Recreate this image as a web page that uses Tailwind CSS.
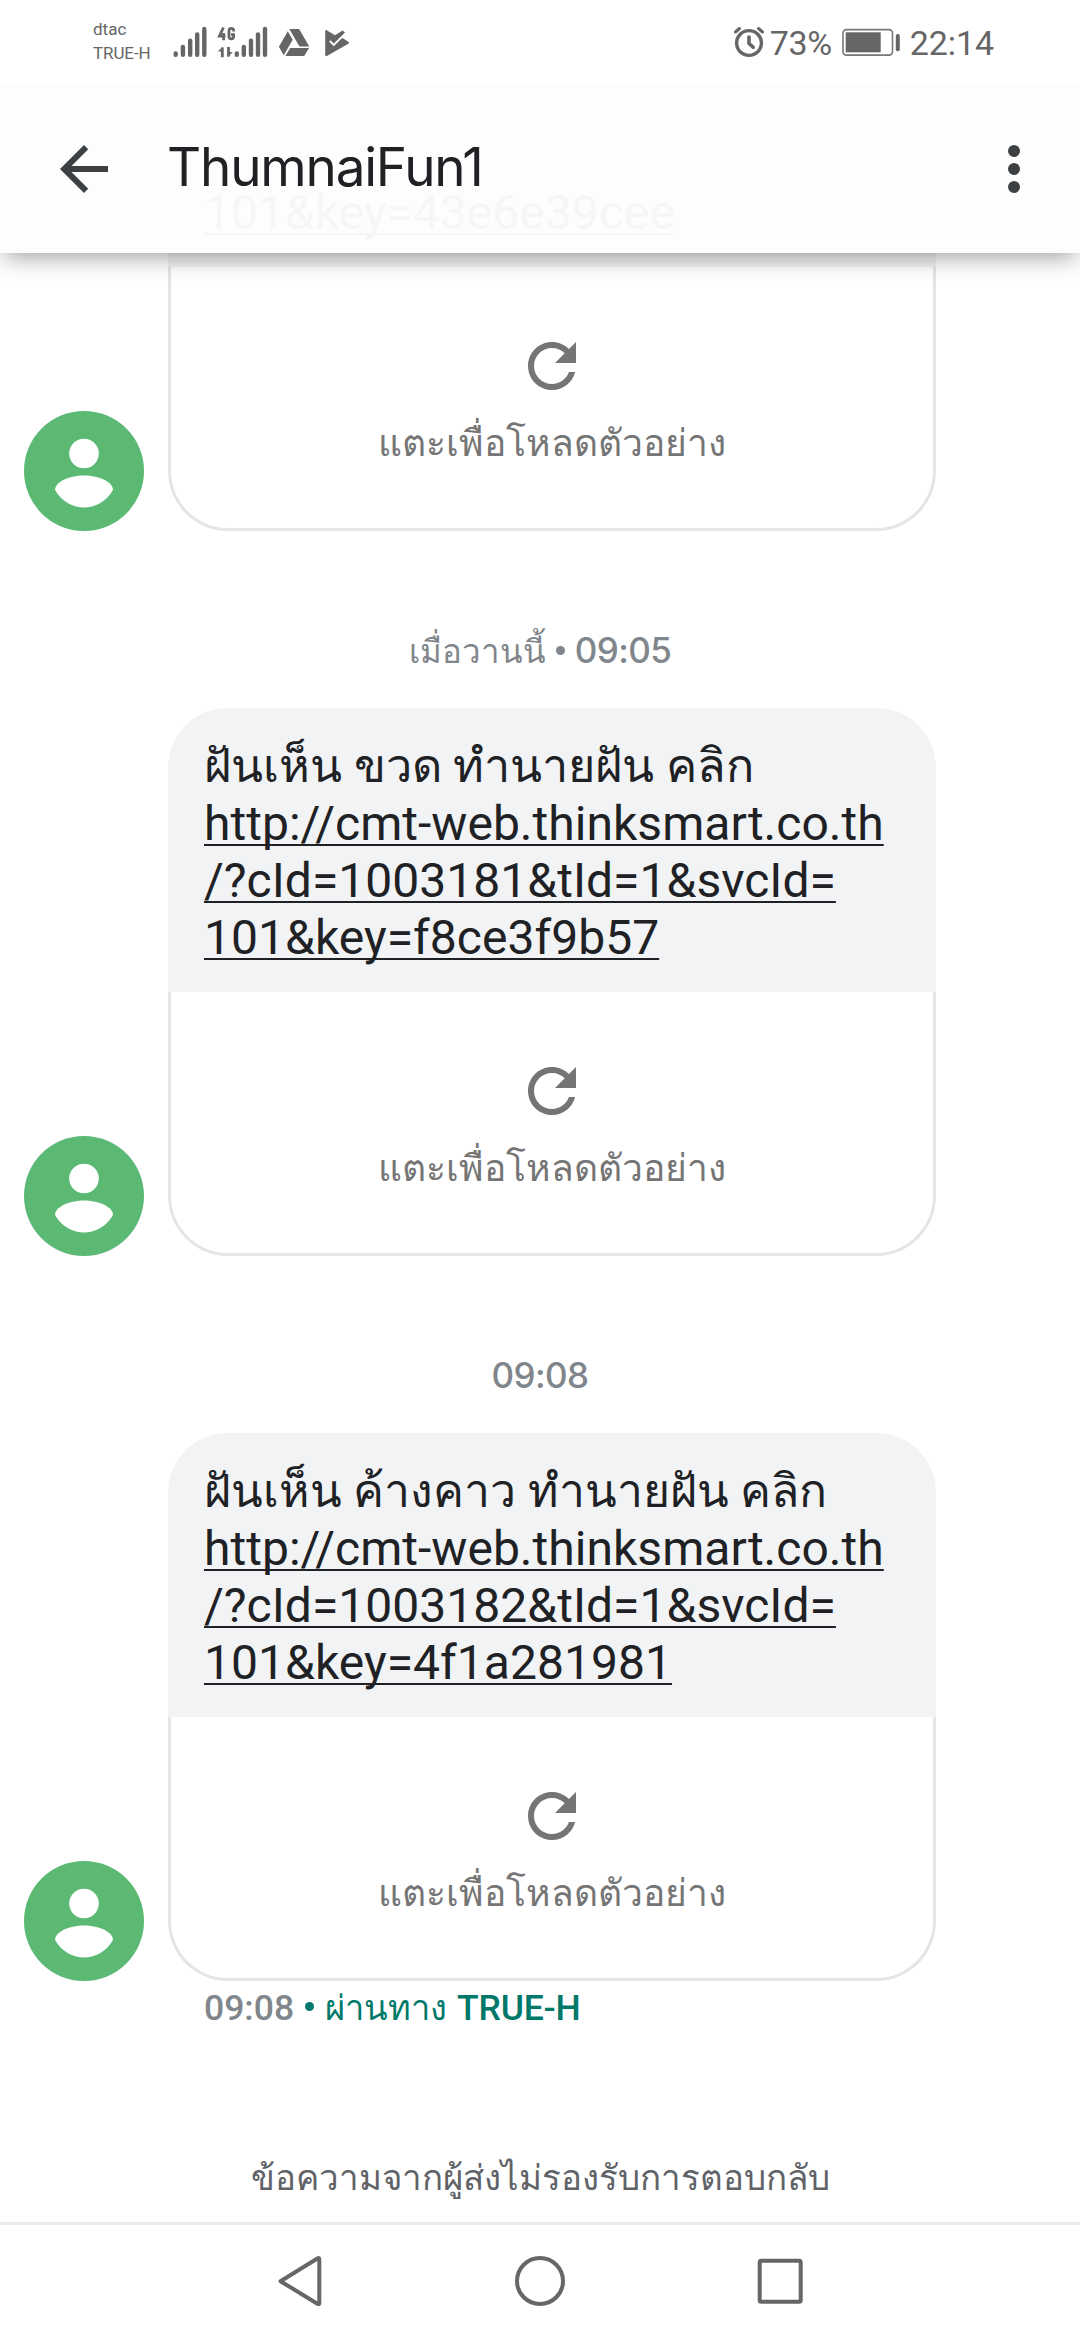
<!DOCTYPE html>
<html lang="th">
<head>
<meta charset="utf-8">
<title>ThumnaiFun1</title>
<script src="https://cdn.jsdelivr.net/npm/@tailwindcss/browser@4"></script>
</head>
<body class="bg-white">
<svg class="hidden">
  <symbol id="refresh" viewBox="0 0 24 24"><path d="M17.65 6.35C16.2 4.9 14.21 4 12 4c-4.42 0-7.99 3.58-7.99 8s3.57 8 7.99 8c3.73 0 6.84-2.55 7.73-6h-2.08c-.82 2.33-3.04 4-5.65 4-3.31 0-6-2.69-6-6s2.69-6 6-6c1.66 0 3.14.69 4.22 1.78L13 11h7V4l-2.35 2.35z"/></symbol>
  <symbol id="avatar" viewBox="0 0 120 120"><circle cx="60" cy="60" r="60" fill="#5bb974"/><circle cx="60" cy="42.500" r="14.800" fill="#fff"/><path d="M31 79c0-8 14-14.500 29-14.500S89 71 89 79c-6 10.500-17 17.500-29 17.500S37 89.500 31 79z" fill="#fff"/></symbol>
</svg>
<div class="flex h-[2340px] w-[1080px] flex-col overflow-hidden bg-white font-[Roboto,serif] text-[#202124]">

  <!-- status bar -->
  <div class="relative z-20 flex h-[85px] shrink-0 items-start bg-white pr-[86px] pl-[93px] text-[#666]">
    <div class="w-[78px] pt-[18px] text-[17px] leading-[23.5px]">
      <div>dtac</div><div class="tracking-[-0.1px]">TRUE-H</div>
    </div>
    <svg class="mt-[20px] h-[44px] w-[184px]" viewBox="171 20 184 44" fill="#666">
      <g stroke="#666" stroke-width="4.400" stroke-linecap="round">
        <path d="M175.700 53.500v1.300M182.900 47v7.800M190.200 40.700v14.100M197.200 34.500v20.300M204.300 29v25.800"/>
        <path d="M236.800 53.500v1.300M243.800 47v7.800M251 40.700v14.100M258 34.500v20.300M265 29v25.800"/>
      </g>
      <g fill="none" stroke="#666" stroke-width="2.800">
        <path d="M223.500 27.500l-4.200 8.700h6.200M223.600 33v7.200"/>
        <path d="M233.600 31.500v-1c0-1.300-.9-2.200-2.300-2.200s-2.300.9-2.300 2.200v6c0 1.400.9 2.300 2.300 2.300s2.300-.9 2.300-2.300v-1.900h-2.500"/>
        <path d="M222.300 47.500v9.800M228.500 47v9.500"/>
      </g>
      <path d="M217.800 51.500l5-4.800v4.800zM227.800 57.300v-5.300h5z"/>
      <path d="M289.300 29h9.800l10.200 17.500h-9.800zM287.800 31.300l4.900 8.500-9 15.500-4.800-8.600zM290.200 47.900h18.900l-4.900 8.200h-18.800z"/>
      <path d="M325.200 31c0-.8.700-1.200 1.500-.8l8.300 5 7.600-4.700 2.400 2.300-11 11.500 7-5.800 1.500-.6 5.800 3.800c.9.700.9 1.500 0 2.100l-21 12c-1.200.6-2.100.3-2.100-.8z"/>
      <path d="M329.800 41l4 3.900 11.500-11.300" fill="none" stroke="#fff" stroke-width="2"/>
    </svg>
    <div class="ml-auto flex items-start">
      <svg class="mt-[26px] h-[32px] w-[32px]" viewBox="732 26 32 32" fill="none" stroke="#666" stroke-linecap="round">
        <circle cx="748" cy="43" r="12.400" stroke-width="3.400"/><path d="M748 37v6.500l4.200 3.700" stroke-width="3.600"/><path d="M734.500 32l4-3.500M761.500 32l-4-3.500" stroke-width="3"/>
      </svg>
      <span class="mt-[23px] ml-[5px] w-[72px] text-[34px] leading-[40px] tracking-[-0.4px]">73%</span>
      <svg class="mt-[28px] h-[30px] w-[60px]" viewBox="841 28 60 30">
        <rect x="842" y="29.600" width="49.500" height="25.500" rx="3.500" fill="#fff" stroke="#777" stroke-width="1.600"/><rect x="844.700" y="32.300" width="35" height="20" fill="#666"/><rect x="894.800" y="34" width="4" height="17.300" rx="1.800" fill="#666"/>
      </svg>
      <span class="mt-[23px] ml-[8px] text-[34px] leading-[40px] tracking-[-0.1px]">22:14</span>
    </div>
  </div>

  <!-- app bar, slightly translucent over the scrolled conversation -->
  <header class="relative z-10 flex h-[168px] shrink-0 items-center bg-[#fdfdfd]/97 pr-[30px] pl-[48px] shadow-[0_8px_22px_-4px_rgba(0,0,0,0.38)]">
    <svg class="h-[72px] w-[72px]" viewBox="0 0 24 24" fill="#3c4043"><path d="M20 11H7.830l5.590-5.590L12 4l-8 8 8 8 1.410-1.410L7.830 13H20v-2z"/></svg>
    <h1 class="mb-[5px] ml-[47px] font-[Inter,sans-serif] text-[53px] leading-[64px] tracking-[-1.2px] whitespace-nowrap">ThumnaiFun1</h1>
    <svg class="ml-auto h-[72px] w-[72px]" viewBox="0 0 24 24" fill="#3c4043"><circle cx="12" cy="6" r="2"/><circle cx="12" cy="12" r="2"/><circle cx="12" cy="18" r="2"/></svg>
  </header>

  <main class="-mt-[168px] flex flex-col">
    <!-- first message, mostly scrolled away -->
    <div class="flex items-end gap-[24px] pl-[24px]">
      <svg class="h-[120px] w-[120px]"><use href="#avatar"/></svg>
      <div class="w-[768px]">
        <div class="flex h-[182px] items-end bg-[#f1f3f4] px-[36px] pb-[26px] text-[48px] leading-[57px]">
          <a class="underline decoration-2 underline-offset-[4px] [text-decoration-skip-ink:none]">101&amp;key=43e6e39cee</a>
        </div>
        <div class="flex h-[264px] flex-col items-center rounded-b-[60px] border-x-[3px] border-b-[3px] border-[#e5e5e5] pt-[63px]">
          <svg class="h-[72px] w-[72px]" fill="#757575"><use href="#refresh"/></svg>
          <p class="mt-[16px] text-[37.2px] leading-[50px] whitespace-nowrap text-[#757575]">แตะเพื่อโหลดตัวอย่าง</p>
        </div>
      </div>
    </div>

    <p class="flex h-[177px] items-baseline justify-center gap-[10px] pt-[94px] leading-[50px] whitespace-nowrap text-[#80868b]">
      <span class="text-[33px]">เมื่อวานนี้</span><span class="font-[Inter,sans-serif] text-[35px] font-medium tracking-[-0.6px]"><span class="mr-[10px] inline-block h-[9px] w-[9px] rounded-full bg-[#80868b] align-[8px]"></span>09:05</span>
    </p>

    <div class="flex items-end gap-[24px] pl-[24px]">
      <svg class="h-[120px] w-[120px]"><use href="#avatar"/></svg>
      <div class="w-[768px]">
        <div class="h-[284px] rounded-t-[60px] bg-[#f1f3f4] px-[36px] pt-[30px] text-[48px] leading-[57px] whitespace-nowrap">
          <p class="h-[57px] text-[46.8px]">ฝันเห็น ขวด ทำนายฝัน คลิก</p>
          <a class="tracking-[0.03px] underline decoration-2 underline-offset-[4px] [text-decoration-skip-ink:none]">http://cmt-web.thinksmart.co.th<br>/?cId=1003181&amp;tId=1&amp;svcId=<br>101&amp;key=f8ce3f9b57</a>
        </div>
        <div class="flex h-[264px] flex-col items-center rounded-b-[60px] border-x-[3px] border-b-[3px] border-[#e5e5e5] pt-[63px]">
          <svg class="h-[72px] w-[72px]" fill="#757575"><use href="#refresh"/></svg>
          <p class="mt-[16px] text-[37.2px] leading-[50px] whitespace-nowrap text-[#757575]">แตะเพื่อโหลดตัวอย่าง</p>
        </div>
      </div>
    </div>

    <p class="h-[177px] pt-[94px] text-center font-[Inter,sans-serif] text-[35px] leading-[50px] font-medium tracking-[-0.6px] text-[#80868b]">09:08</p>

    <div class="flex items-end gap-[24px] pl-[24px]">
      <svg class="h-[120px] w-[120px]"><use href="#avatar"/></svg>
      <div class="w-[768px]">
        <div class="h-[284px] rounded-t-[60px] bg-[#f1f3f4] px-[36px] pt-[30px] text-[48px] leading-[57px] whitespace-nowrap">
          <p class="h-[57px] text-[46.3px]">ฝันเห็น ค้างคาว ทำนายฝัน คลิก</p>
          <a class="tracking-[0.03px] underline decoration-2 underline-offset-[4px] [text-decoration-skip-ink:none]">http://cmt-web.thinksmart.co.th<br>/?cId=1003182&amp;tId=1&amp;svcId=<br>101&amp;key=4f1a281981</a>
        </div>
        <div class="flex h-[264px] flex-col items-center rounded-b-[60px] border-x-[3px] border-b-[3px] border-[#e5e5e5] pt-[63px]">
          <svg class="h-[72px] w-[72px]" fill="#757575"><use href="#refresh"/></svg>
          <p class="mt-[16px] text-[37.2px] leading-[50px] whitespace-nowrap text-[#757575]">แตะเพื่อโหลดตัวอย่าง</p>
        </div>
      </div>
    </div>

    <p class="flex items-baseline pt-[2px] pl-[204px] text-[35.5px] leading-[50px] whitespace-nowrap text-[#00796b]">
      <span class="font-medium text-[#80868b]">09:08</span>
      <span class="mx-[11px] inline-block h-[9px] w-[9px] -translate-y-[9px] rounded-full bg-[#00796b]"></span>
      <span class="text-[34.5px]">ผ่านทาง</span>
      <span class="ml-[10px] font-medium tracking-[-0.2px]">TRUE-H</span>
    </p>
  </main>

  <footer class="mt-auto">
    <p class="h-[68px] text-center text-[34.9px] leading-[50px] whitespace-nowrap text-[#5f6368]">ข้อความจากผู้ส่งไม่รองรับการตอบกลับ</p>
    <nav class="flex h-[118px] justify-center border-t-[3px] border-[#e8eaed]">
      <svg class="h-[115px] w-[600px]" viewBox="240 2225 600 115" fill="none" stroke="#666" stroke-width="4" stroke-linejoin="round">
        <path d="M280.500 2281.200L317.800 2258.300Q319.300 2257.500 319.300 2259.300V2303Q319.300 2304.800 317.800 2304L280.500 2281.200z"/>
        <circle cx="540" cy="2281" r="23"/>
        <rect x="759.700" y="2260.700" width="41" height="41" rx="1.500"/>
      </svg>
    </nav>
  </footer>
</div>
</body>
</html>
